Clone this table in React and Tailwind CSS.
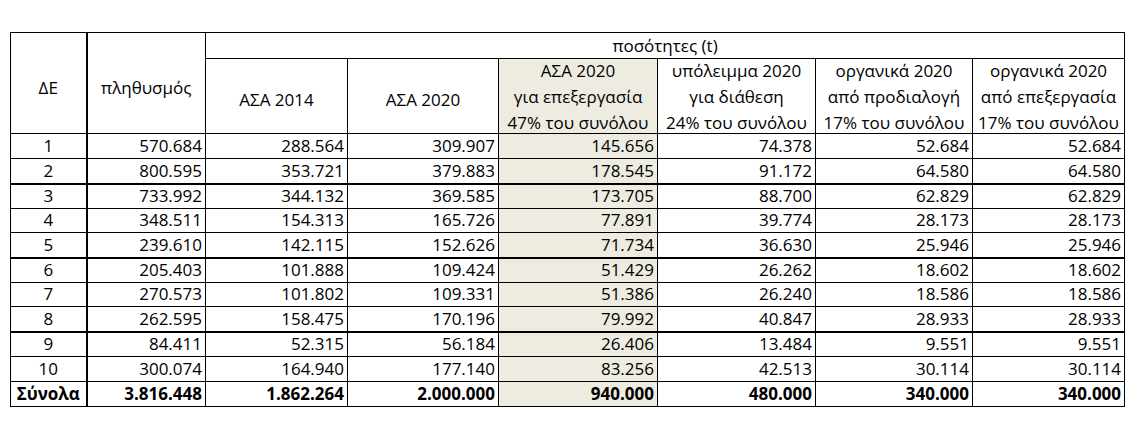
import React from 'react';

const rows = [
  ['1', '570.684', '288.564', '309.907', '145.656', '74.378', '52.684', '52.684'],
  ['2', '800.595', '353.721', '379.883', '178.545', '91.172', '64.580', '64.580'],
  ['3', '733.992', '344.132', '369.585', '173.705', '88.700', '62.829', '62.829'],
  ['4', '348.511', '154.313', '165.726', '77.891', '39.774', '28.173', '28.173'],
  ['5', '239.610', '142.115', '152.626', '71.734', '36.630', '25.946', '25.946'],
  ['6', '205.403', '101.888', '109.424', '51.429', '26.262', '18.602', '18.602'],
  ['7', '270.573', '101.802', '109.331', '51.386', '26.240', '18.586', '18.586'],
  ['8', '262.595', '158.475', '170.196', '79.992', '40.847', '28.933', '28.933'],
  ['9', '84.411', '52.315', '56.184', '26.406', '13.484', '9.551', '9.551'],
  ['10', '300.074', '164.940', '177.140', '83.256', '42.513', '30.114', '30.114'],
];

const totals = ['Σύνολα', '3.816.448', '1.862.264', '2.000.000', '940.000', '480.000', '340.000', '340.000'];

// rows followed by a heavier rule
const thickAfter = [1, 4, 7];
const shortRows = [3, 6];

const widths = [76, 119, 142, 151, 159, 158, 157, 152];

function HeadLines({ lines, shaded }) {
  return (
    <th className={`border border-black p-0 align-top font-normal ${shaded ? 'bg-[#eeece1]' : ''}`}>
      <div className="h-[74px] leading-[26px] -mt-[1px]">
        {lines.map((l) => (
          <div key={l} className="whitespace-nowrap">{l}</div>
        ))}
      </div>
    </th>
  );
}

export default function App() {
  return (
    <div className="w-[1137px] h-[424px] bg-white pt-[32px] pl-[10px] text-black text-[17px]" style={{ fontFamily: '"Open Sans", "Noto Sans", sans-serif' }}>
      <table className="table-fixed border-collapse w-[1115px]">
        <colgroup>
          {widths.map((w, i) => (
            <col key={i} style={{ width: w }} />
          ))}
        </colgroup>
        <thead>
          <tr className="h-[26px]">
            <th rowSpan={2} className="border border-black border-r-2 p-0 pt-[42px] align-top font-normal leading-[25px]">ΔΕ</th>
            <th rowSpan={2} className="border border-black p-0 pt-[42px] align-top font-normal leading-[25px]">πληθυσμός</th>
            <th colSpan={6} className="border border-black p-0 pb-[2px] align-bottom font-normal leading-[20px]">ποσότητες (t)</th>
          </tr>
          <tr className="h-[75px]">
            <th className="border border-black p-0 pt-[28px] align-top font-normal leading-[25px]">ΑΣΑ 2014</th>
            <th className="border border-black p-0 pt-[28px] align-top font-normal leading-[25px]">ΑΣΑ 2020</th>
            <HeadLines shaded lines={['ΑΣΑ 2020', 'για επεξεργασία', '47% του συνόλου']} />
            <HeadLines lines={['υπόλειμμα 2020', 'για διάθεση', '24% του συνόλου']} />
            <HeadLines lines={['οργανικά 2020', 'από προδιαλογή', '17% του συνόλου']} />
            <HeadLines lines={['οργανικά 2020', 'από επεξεργασία', '17% του συνόλου']} />
          </tr>
        </thead>
        <tbody>
          {rows.map((r, ri) => (
            <tr key={r[0]} className={shortRows.includes(ri) ? 'h-[24px]' : 'h-[25px]'}>
              {r.map((c, ci) => (
                <td
                  key={ci}
                  className={`border border-black p-0 pb-[2px] align-bottom leading-[20px] ${thickAfter.includes(ri) ? 'border-b-2' : ''} ${ci === 0 ? 'text-center border-r-2' : 'text-right pr-[3px]'} ${ci === 4 ? 'bg-[#eeece1]' : ''}`}
                >
                  {c}
                </td>
              ))}
            </tr>
          ))}
          <tr className="h-[25px]">
            {totals.map((c, ci) => (
              <td
                key={ci}
                className={`border border-black p-0 pb-[2px] align-bottom leading-[20px] font-bold ${ci === 0 ? 'text-center border-r-2' : 'text-right pr-[3px]'} ${ci === 4 ? 'bg-[#eeece1]' : ''}`}
              >
                {c}
              </td>
            ))}
          </tr>
        </tbody>
      </table>
    </div>
  );
}
